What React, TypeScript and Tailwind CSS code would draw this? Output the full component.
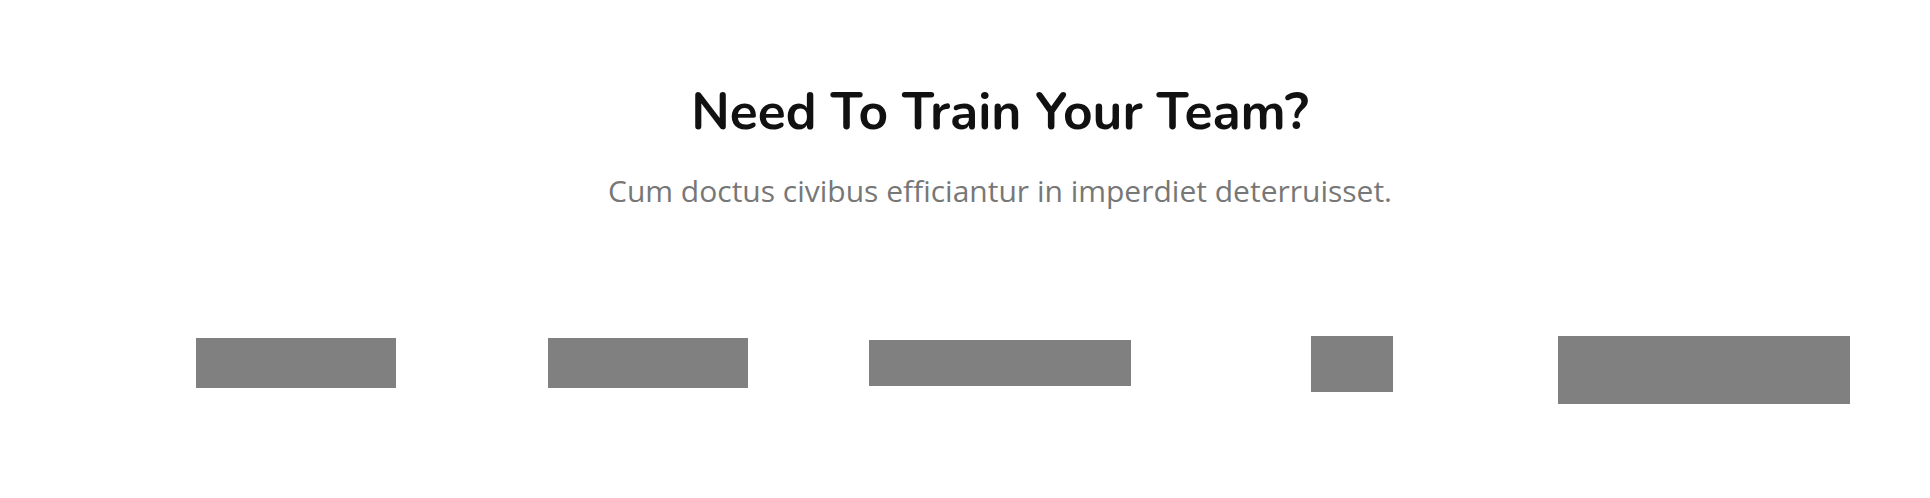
import React from 'react';

const logos = [
  { w: 'w-[200px]', h: 'h-[50px]', mt: 'mt-[2px]' },
  { w: 'w-[200px]', h: 'h-[50px]', mt: 'mt-[2px]' },
  { w: 'w-[262px]', h: 'h-[46px]', mt: 'mt-[4px]' },
  { w: 'w-[82px]', h: 'h-[56px]', mt: 'mt-0' },
  { w: 'w-[292px]', h: 'h-[68px]', mt: 'mt-0' },
];

const App: React.FC = () => {
  return (
    <div className="h-[498px] w-full bg-white">
      <div className="ml-[120px] w-[1760px] pt-[82px]">
        {/* Heading */}
        <div className="flex flex-col items-center text-center">
          <h2 className="font-['Nunito','Lato',sans-serif] text-[51.5px] font-bold leading-[60px] text-[#111]">
            Need To Train Your Team?
          </h2>
          <p className="mt-[29px] font-['Open_Sans',sans-serif] text-[30px] leading-[40px] text-[#777]">
            Cum doctus civibus efficiantur in imperdiet deterruisset.
          </p>
        </div>

        {/* Logos row */}
        <div className="mt-[125px] grid grid-cols-5">
          {logos.map((logo, i) => (
            <div key={i} className="flex justify-center">
              <div className={`${logo.w} ${logo.h} ${logo.mt} bg-[#808080]`} />
            </div>
          ))}
        </div>
      </div>
    </div>
  );
};

export default App;
